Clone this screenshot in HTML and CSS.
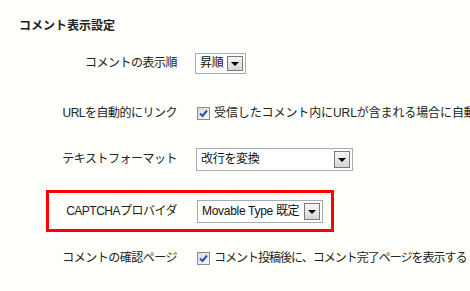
FILE: index.html
```html
<!DOCTYPE html>
<html lang="ja">
<head>
<meta charset="utf-8">
<link rel="stylesheet" href="styles.css">
</head>
<body>
<h2 class="heading">コメント表示設定</h2>
<div class="row r1">
  <div class="label">コメントの表示順</div>
  <div class="select s1"><span class="sel-text">昇順</span><span class="btn"><span class="tri"></span></span></div>
</div>
<div class="row r2">
  <div class="label">URLを自動的にリンク</div>
  <div class="check-line"><span class="cb"><svg width="9" height="9" viewBox="0 0 9 9"><path d="M1 4.5 L3.5 7 L8 1.5" fill="none" stroke="#2a52be" stroke-width="2"/></svg></span><span class="check-text wide">受信したコメント内にURLが含まれる場合に自動的にリンクする</span></div>
</div>
<div class="row r3">
  <div class="label">テキストフォーマット</div>
  <div class="select s3"><span class="sel-text">改行を変換</span><span class="btn"><span class="tri"></span></span></div>
</div>
<div class="row captcha">
  <div class="label">CAPTCHAプロバイダ</div>
  <div class="select s4"><span class="sel-text">Movable Type 既定</span><span class="btn"><span class="tri"></span></span></div>
</div>
<div class="row r5">
  <div class="label">コメントの確認ページ</div>
  <div class="check-line"><span class="cb"><svg width="9" height="9" viewBox="0 0 9 9"><path d="M1 4.5 L3.5 7 L8 1.5" fill="none" stroke="#2a52be" stroke-width="2"/></svg></span><span class="check-text tight">コメント投稿後に、コメント完了ページを表示する</span></div>
</div>
</body>
</html>
```

FILE: styles.css
```css
html, body {
  margin: 0;
  padding: 0;
}
body {
  width: 470px;
  height: 291px;
  overflow: hidden;
  background: #fffffb;
  color: #222;
  font-family: "Liberation Sans", "Noto Sans CJK JP", sans-serif;
  font-size: 12px;
  line-height: 14px;
}
.heading {
  margin: 0;
  padding: 19px 0 0 19px;
  font-size: 12px;
  line-height: 14px;
  font-weight: bold;
  height: 20px;
}
.row {
  display: grid;
  grid-template-columns: 177px auto;
  column-gap: 19px;
  align-items: center;
  white-space: nowrap;
}
.label {
  text-align: right;
  letter-spacing: -0.5px;
}
.r1 { height: 48px; }
.r2 { height: 52px; }
.r3 { height: 40px; }
.r5 { height: 52px; }
.captcha {
  margin: 11px 0 0 46px;
  width: 282px;
  height: 36px;
  border: 3px solid #f00;
  grid-template-columns: 128px auto;
  column-gap: 20px;
}
.select {
  box-sizing: border-box;
  height: 21px;
  border: 1px solid #a5acb2;
  background: #fff;
  display: flex;
  align-items: center;
  padding-left: 4px;
  color: #111;
}
.s1 { width: 51px; margin-left: -1px; }
.s3 { width: 157px; height: 23px; }
.s4 { width: 126px; height: 23px; }
.sel-text {
  flex: 1;
  overflow: hidden;
  letter-spacing: -0.3px;
}
.btn {
  box-sizing: border-box;
  flex: none;
  width: 16px;
  height: calc(100% - 4px);
  margin-right: 2px;
  border: 1px solid #7b7b7b;
  background: linear-gradient(#f6f6f6, #d6d6d6);
  display: flex;
  align-items: center;
  justify-content: center;
}
.tri {
  width: 0;
  height: 0;
  border-left: 4px solid transparent;
  border-right: 4px solid transparent;
  border-top: 4px solid #000;
  margin-top: 1px;
}
.check-line {
  display: flex;
  align-items: center;
  gap: 4px;
  margin-left: 1px;
}
.check-text {
  letter-spacing: -0.5px;
}
.check-text.wide {
  letter-spacing: -0.1px;
}
.check-text.tight {
  letter-spacing: -1px;
}
.cb {
  box-sizing: border-box;
  width: 13px;
  height: 13px;
  border: 1px solid #8c8c8c;
  background: linear-gradient(135deg, #dcdcd8, #f8f8f6);
  display: flex;
  align-items: center;
  justify-content: center;
  flex: none;
}
```
